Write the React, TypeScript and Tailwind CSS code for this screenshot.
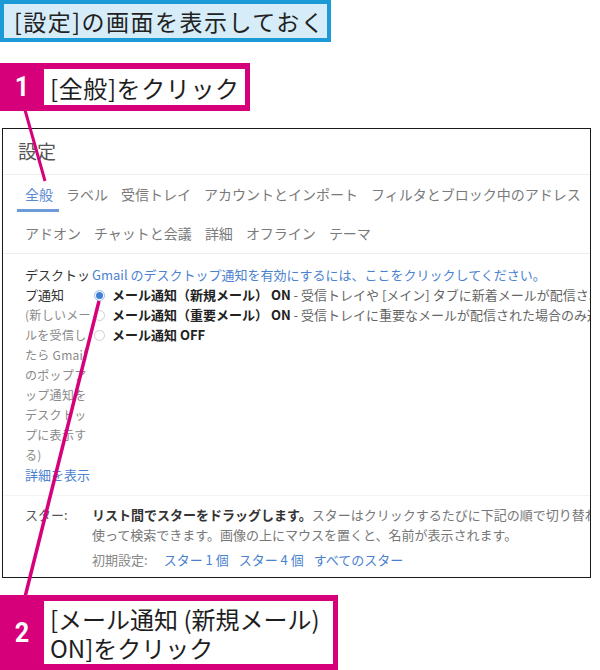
const jp = "font-['Noto_Sans_CJK_JP','Noto_Sans',sans-serif]";

const Radio = ({ on }: { on?: boolean }) =>
  on ? (
    <span className="w-[11px] h-[11px] rounded-full border border-[#9bbbe6] bg-white flex items-center justify-center shrink-0">
      <span className="w-[7px] h-[7px] rounded-full bg-[#3f7fd6]" />
    </span>
  ) : (
    <span className="w-[11px] h-[11px] rounded-full border border-[#cfcfcf] bg-white shrink-0" />
  );

const StepBox = ({ n, children }: { n: string; children: React.ReactNode }) => (
  <div className="flex bg-[#d5007a]">
    <div className="w-[44px] flex items-center justify-center text-white font-['Roboto',sans-serif] font-bold text-[28px] scale-x-90">
      {n}
    </div>
    <div className="bg-white my-[6px] mr-[5px] px-[6px] text-[#1e1e1e] text-[24px] leading-[29px] whitespace-nowrap flex flex-col justify-center">
      {children}
    </div>
  </div>
);

export default function App() {
  const tabs1 = ["ラベル", "受信トレイ", "アカウントとインポート", "フィルタとブロック中のアドレス"];
  const tabs2 = ["アドオン", "チャットと会議", "詳細", "オフライン", "テーマ"];
  const desc = ["(新しいメー", "ルを受信し", "たら Gmail", "のポップア", "ップ通知を", "デスクトッ", "プに表示す", "る)"];

  return (
    <div className={`relative w-[600px] h-[670px] bg-white overflow-hidden ${jp}`}>
      {/* 見出し */}
      <div className="w-[331px] h-[42px] border-4 border-[#1b9ad6] bg-[#d6ecf8] flex items-center pl-[10px] text-[23px] tracking-[1.5px] text-[#222] whitespace-nowrap">
        [設定]の画面を表示しておく
      </div>

      <div className="mt-[21px] w-[250px] h-[48px] flex">
        <StepBox n="1">
          <div className="w-[189px] h-[37px] flex items-center tracking-[0.6px]">[全般]をクリック</div>
        </StepBox>
      </div>

      {/* Gmail 設定画面 */}
      <div className="mt-[17px] ml-[2px] w-[589px] h-[450px] border-[1.5px] border-[#1a1a1a] overflow-hidden whitespace-nowrap">
        <div className="h-[46px] flex items-center pl-[15px] text-[19px] text-[#555] border-b border-[#eeeeee]">設定</div>

        <div className="pl-[22px] text-[14px] text-[#7a7a7a] border-b border-[#eeeeee]">
          <div className="h-[38px] flex items-center gap-[13px]">
            <span className="relative h-full flex items-center text-[#5a8ad4]">
              全般
              <span className="absolute bottom-[1px] -left-[8px] -right-[6px] h-[3px] bg-[#6f9ad8]" />
            </span>
            {tabs1.map((t) => (
              <span key={t}>{t}</span>
            ))}
          </div>
          <div className="h-[40px] flex items-center gap-[13px]">
            {tabs2.map((t) => (
              <span key={t}>{t}</span>
            ))}
          </div>
        </div>

        <div className="flex pl-[22px] pt-[11px] pb-[10px] leading-[20px] border-b border-[#f3f3f3]">
          <div className="w-[67px] shrink-0">
            <div className="text-[13px] text-[#333]">デスクトッ</div>
            <div className="text-[13px] text-[#333]">プ通知</div>
            {desc.map((d) => (
              <div key={d} className="text-[12px] tracking-[0.3px] text-[#8a8a8a]">{d}</div>
            ))}
            <div className="text-[13px] text-[#4b82d0]">詳細を表示</div>
          </div>
          <div className="text-[13px]">
            <div className="text-[#4b82d0]">Gmail のデスクトップ通知を有効にするには、ここをクリックしてください。</div>
            <div className="flex items-center gap-[7px] pl-[2px]">
              <Radio on />
              <span>
                <b className="font-bold text-[#222]">メール通知（新規メール） ON</b>
                <span className="text-[#666]"> - 受信トレイや [メイン] タブに新着メールが配信されたときに通知します</span>
              </span>
            </div>
            <div className="flex items-center gap-[7px] pl-[2px]">
              <Radio />
              <span>
                <b className="font-bold text-[#222]">メール通知（重要メール） ON</b>
                <span className="text-[#666]"> - 受信トレイに重要なメールが配信された場合のみ通知します</span>
              </span>
            </div>
            <div className="flex items-center gap-[7px] pl-[2px]">
              <Radio />
              <b className="font-bold text-[#222]">メール通知 OFF</b>
            </div>
          </div>
        </div>

        <div className="flex pl-[22px] pt-[9px] leading-[20px] text-[13px]">
          <div className="w-[67px] shrink-0 text-[#555]">スター:</div>
          <div>
            <div>
              <b className="font-bold text-[#333]">リスト間でスターをドラッグします。</b>
              <span className="text-[#777]">スターはクリックするたびに下記の順で切り替わります。</span>
            </div>
            <div className="text-[#777]">使って検索できます。画像の上にマウスを置くと、名前が表示されます。</div>
            <div className="mt-[5px] flex gap-[10px] text-[#4b82d0]">
              <span className="text-[#888] mr-[6px]">初期設定:</span>
              <span>スター 1 個</span>
              <span>スター 4 個</span>
              <span>すべてのスター</span>
            </div>
          </div>
        </div>
      </div>

      <div className="mt-[17px] w-[338px] h-[75px] flex">
        <StepBox n="2">
          <div className="w-[277px] h-[62px] flex flex-col justify-center">
            <span>[メール通知 (新規メール)</span>
            <span>ON]をクリック</span>
          </div>
        </StepBox>
      </div>

      {/* 引き出し線 */}
      <svg className="absolute inset-0 pointer-events-none" width="600" height="670">
        <line x1="25" y1="110" x2="45" y2="181" stroke="#d5007a" strokeWidth="3" />
        <line x1="99" y1="301" x2="25" y2="597" stroke="#d5007a" strokeWidth="3.5" />
      </svg>
    </div>
  );
}
